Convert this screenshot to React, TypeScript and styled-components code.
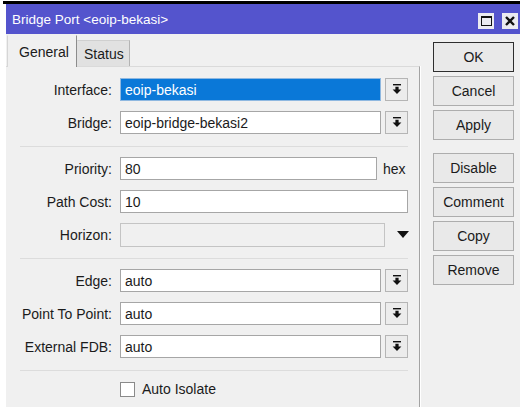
import React from "react";
import styled, { createGlobalStyle } from "styled-components";

const GlobalStyle = createGlobalStyle`
  html, body {
    margin: 0;
    padding: 0;
    background: #ffffff;
  }
  body {
    font-family: "Liberation Sans", Arial, sans-serif;
    font-size: 14px;
    color: #1b1b1b;
  }
`;

function DropIcon() {
  return (
    <svg width="10" height="11" viewBox="0 0 10 11">
      <rect x="1" y="0" width="8" height="1.4" fill="#111" />
      <path d="M3.4 2.8h3.2v2.6h2.8L5 10 0.6 5.4h2.8z" fill="#111" />
    </svg>
  );
}

function ComboBox({ value, selected }: { value: string; selected?: boolean }) {
  return (
    <FieldLine>
      <TextBox $width={261} $selected={selected}>
        {value}
      </TextBox>
      <DropButton>
        <DropIcon />
      </DropButton>
    </FieldLine>
  );
}

export default function App() {
  return (
    <Page>
      <GlobalStyle />
      <EdgeBar />
      <Window>
        <TitleBar>
          <span>Bridge Port &lt;eoip-bekasi&gt;</span>
          <TitleButtons>
            <TitleButton>
              <MaxGlyph />
            </TitleButton>
            <TitleButton>
              <svg width="10" height="10" viewBox="0 0 10 10">
                <path d="M1 1L9 9M9 1L1 9" stroke="#111" strokeWidth="2.4" />
              </svg>
            </TitleButton>
          </TitleButtons>
        </TitleBar>

        <Body>
          <TabArea>
            <TabStrip>
              <Tab $active>General</Tab>
              <Tab>Status</Tab>
            </TabStrip>
            <Panel>
              <Group>
                <FormRow>
                  <Label>Interface:</Label>
                  <ComboBox value="eoip-bekasi" selected />
                </FormRow>
                <FormRow>
                  <Label>Bridge:</Label>
                  <ComboBox value="eoip-bridge-bekasi2" />
                </FormRow>
              </Group>
              <Separator />
              <Group>
                <FormRow>
                  <Label>Priority:</Label>
                  <FieldLine>
                    <TextBox $width={257}>80</TextBox>
                    <Unit>hex</Unit>
                  </FieldLine>
                </FormRow>
                <FormRow>
                  <Label>Path Cost:</Label>
                  <TextBox $width={288}>10</TextBox>
                </FormRow>
                <FormRow>
                  <Label>Horizon:</Label>
                  <FieldLine>
                    <TextBox $width={265} $disabled />
                    <ArrowDown />
                  </FieldLine>
                </FormRow>
              </Group>
              <Separator />
              <Group>
                <FormRow>
                  <Label>Edge:</Label>
                  <ComboBox value="auto" />
                </FormRow>
                <FormRow>
                  <Label>Point To Point:</Label>
                  <ComboBox value="auto" />
                </FormRow>
                <FormRow>
                  <Label>External FDB:</Label>
                  <ComboBox value="auto" />
                </FormRow>
              </Group>
              <Separator />
              <CheckRow>
                <CheckBox />
                <span>Auto Isolate</span>
              </CheckRow>
            </Panel>
          </TabArea>

          <ButtonColumn>
            <ActionButton $default>OK</ActionButton>
            <ActionButton>Cancel</ActionButton>
            <ActionButton>Apply</ActionButton>
            <ActionButton $spaced>Disable</ActionButton>
            <ActionButton>Comment</ActionButton>
            <ActionButton>Copy</ActionButton>
            <ActionButton>Remove</ActionButton>
          </ButtonColumn>
        </Body>
      </Window>
    </Page>
  );
}

const Page = styled.div`
  width: 520px;
  height: 407px;
  overflow: hidden;
  padding-top: 1px;
  box-sizing: border-box;
`;

const EdgeBar = styled.div`
  height: 3px;
  margin-left: 3px;
  background: #000;
`;

const Window = styled.div`
  margin-left: 6px;
  height: 403px;
  background: #f0f0f0;
`;

const TitleBar = styled.div`
  height: 30px;
  background: #5454cd;
  color: #fff;
  font-size: 13.5px;
  display: flex;
  align-items: center;
  justify-content: space-between;
  padding: 0 2px 0 6px;
  box-sizing: border-box;
`;

const TitleButtons = styled.div`
  display: flex;
  gap: 8px;
  margin-top: 4px;
`;

const TitleButton = styled.div`
  width: 16px;
  height: 16px;
  background: #ebebf0;
  display: flex;
  align-items: center;
  justify-content: center;
`;

const MaxGlyph = styled.div`
  width: 11px;
  height: 10px;
  border: 1px solid #111;
  border-top-width: 2px;
  box-sizing: border-box;
`;

const Body = styled.div`
  display: flex;
  height: 373px;
`;

const TabArea = styled.div`
  width: 414px;
  display: flex;
  flex-direction: column;
`;

const TabStrip = styled.div`
  height: 32px;
  display: flex;
  align-items: flex-end;
  padding-left: 1px;
`;

const Tab = styled.div<{ $active?: boolean }>`
  box-sizing: border-box;
  height: ${(p) => (p.$active ? "32px" : "26px")};
  width: ${(p) => (p.$active ? "70px" : "53px")};
  padding: ${(p) => (p.$active ? "8px 0 0 11px" : "5px 0 0 6px")};
  background: ${(p) => (p.$active ? "#f0f0f0" : "#e1e1e1")};
  border-left: 1px solid ${(p) => (p.$active ? "#d6d6d6" : "transparent")};
  border-right: 1px solid ${(p) => (p.$active ? "#8c8c8c" : "#b4b4b4")};
  border-top: 1px solid ${(p) => (p.$active ? "transparent" : "#cfcfcf")};
  margin-bottom: ${(p) => (p.$active ? "-1px" : "0")};
  position: relative;
  z-index: ${(p) => (p.$active ? 1 : 0)};
`;

const Panel = styled.div`
  flex: 1;
  border-top: 1px solid #dadada;
  border-right: 1px solid #a3a3a3;
  box-shadow: 1px 0 0 #ffffff;
  padding-top: 11px;
`;

const Group = styled.div`
  display: flex;
  flex-direction: column;
  gap: 10px;
`;

const FormRow = styled.div`
  display: flex;
  align-items: center;
  height: 23px;
`;

const Label = styled.div`
  width: 114px;
  padding-right: 8px;
  box-sizing: border-box;
  text-align: right;
  white-space: nowrap;
`;

const FieldLine = styled.div`
  display: flex;
  align-items: center;
`;

const TextBox = styled.div<{ $width: number; $selected?: boolean; $disabled?: boolean }>`
  box-sizing: border-box;
  width: ${(p) => p.$width}px;
  height: ${(p) => (p.$disabled ? "24px" : "23px")};
  padding: 0 4px;
  display: flex;
  align-items: center;
  border: 1px solid ${(p) => (p.$selected ? "#8fb8e0" : p.$disabled ? "#c4c4c4" : "#a6a6a6")};
  background: ${(p) => (p.$selected ? "#0a78d8" : p.$disabled ? "#f0f0f0" : "#ffffff")};
  color: ${(p) => (p.$selected ? "#ffffff" : "#1b1b1b")};
`;

const DropButton = styled.div`
  box-sizing: border-box;
  width: 23px;
  height: 23px;
  margin-left: 4px;
  border: 1px solid #b5b5b5;
  background: #ececec;
  display: flex;
  align-items: center;
  justify-content: center;
`;

const Unit = styled.span`
  margin-left: 6px;
`;

const ArrowDown = styled.div`
  margin-left: 12px;
  width: 0;
  height: 0;
  border-left: 6px solid transparent;
  border-right: 6px solid transparent;
  border-top: 7px solid #111;
`;

const Separator = styled.div`
  height: 1px;
  width: 388px;
  margin: 12px 0 10px 14px;
  background: #dcdcdc;
`;

const CheckRow = styled.div`
  display: flex;
  align-items: center;
  gap: 7px;
  margin-left: 114px;
  height: 16px;
`;

const CheckBox = styled.div`
  width: 15px;
  height: 15px;
  box-sizing: border-box;
  border: 1px solid #8a8a8a;
  background: #ffffff;
`;

const ButtonColumn = styled.div`
  display: flex;
  flex-direction: column;
  gap: 4px;
  padding: 8px 0 0 13px;
`;

const ActionButton = styled.div<{ $default?: boolean; $spaced?: boolean }>`
  box-sizing: border-box;
  width: 81px;
  height: 30px;
  margin-top: ${(p) => (p.$spaced ? "9px" : "0")};
  display: flex;
  align-items: center;
  justify-content: center;
  background: #e9e9e9;
  border: 1px solid ${(p) => (p.$default ? "#2e2e2e" : "#adadad")};
  color: #1b1b1b;
`;
